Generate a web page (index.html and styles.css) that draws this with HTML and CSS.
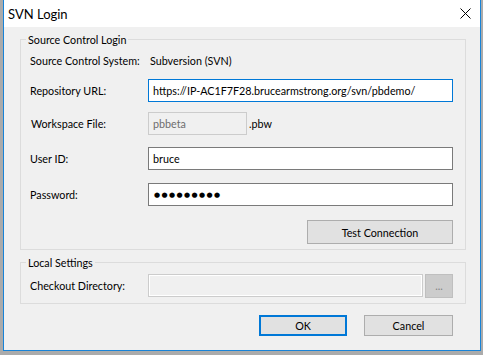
FILE: index.html
```html
<!DOCTYPE html>
<html>
<head>
<meta charset="utf-8">
<link rel="stylesheet" href="styles.css">
</head>
<body>
<div class="window">
  <div class="titlebar">
    <span class="title">SVN Login</span>
    <svg class="close" width="11" height="11" viewBox="0 0 11 11"><path d="M0.5 0.5 L10.5 10.5 M10.5 0.5 L0.5 10.5" stroke="#000" stroke-width="1" fill="none"/></svg>
  </div>
  <div class="client">
    <div class="group group-login">
      <span class="legend">Source Control Login</span>
      <div class="row row-system"><span class="label">Source Control System:</span><span class="value">Subversion (SVN)</span></div>
      <div class="row row-url"><span class="label">Repository URL:</span><div class="input focused">https://IP-AC1F7F28.brucearmstrong.org/svn/pbdemo/</div></div>
      <div class="row row-ws"><span class="label label-ws">Workspace File:</span><div class="input disabled short">pbbeta</div><span class="ext">.pbw</span></div>
      <div class="row row-user"><span class="label">User ID:</span><div class="input">bruce</div></div>
      <div class="row row-pass"><span class="label">Password:</span><div class="input password">●●●●●●●●●</div></div>
      <div class="row row-test"><button class="btn btn-test">Test Connection</button></div>
    </div>
    <div class="group group-local">
      <span class="legend">Local Settings</span>
      <div class="row row-dir"><span class="label">Checkout Directory:</span><div class="input disabled dir"></div><button class="btn btn-browse">...</button></div>
    </div>
    <div class="actions">
      <button class="btn btn-ok">OK</button>
      <button class="btn btn-cancel">Cancel</button>
    </div>
  </div>
</div>
</body>
</html>
```
FILE: styles.css
```css
html, body {
  margin: 0;
  padding: 0;
}
body {
  background: #ababab;
  width: 483px;
  height: 355px;
  overflow: hidden;
  font-family: "Lato", "Noto Sans", sans-serif;
  font-size: 10.75px;
  color: #000;
}
.window {
  margin-left: 3px;
  width: 476px;
  height: 350px;
  border: 1px solid #1883d7;
  border-top: none;
  background: #f0f0f0;
  display: flex;
  flex-direction: column;
}
.titlebar {
  height: 27px;
  background: #fff;
  display: flex;
  align-items: center;
  justify-content: space-between;
  padding: 0 9px 0 4px;
  box-sizing: border-box;
}
.title {
  font-size: 13px;
}
.close {
  display: block;
  margin-top: -1px;
}
.client {
  flex: 1;
  display: flex;
  flex-direction: column;
}
.group {
  position: relative;
  margin-left: 16px;
  width: 435px;
  border: 1px solid #dcdcdc;
  padding-left: 9px;
  box-sizing: content-box;
}
.group-login {
  margin-top: 12px;
  padding-top: 9px;
  padding-bottom: 5px;
}
.group-local {
  margin-top: 12px;
  padding-top: 11px;
  padding-bottom: 6px;
}
.legend {
  position: absolute;
  top: -8px;
  left: 5px;
  padding: 0 2px;
  background: #f0f0f0;
  line-height: 15px;
  white-space: nowrap;
}
.row {
  display: flex;
  align-items: center;
  height: 23px;
  white-space: nowrap;
}
.row-url { margin-top: 7px; }
.row-ws { margin-top: 10px; }
.row-user { margin-top: 12px; }
.row-pass { margin-top: 13px; }
.row-test { margin-top: 14px; height: 24px; justify-content: flex-end; padding-right: 12px; }
.label {
  width: 118px;
  flex: none;
}
.label-ws { padding-left: 1px; width: 117px; }
.value { padding-left: 2px; }
.input {
  box-sizing: border-box;
  width: 305px;
  flex: none;
  height: 23px;
  border: 1px solid #7a7a7a;
  background: #fff;
  padding: 0 4px;
  display: flex;
  align-items: center;
  white-space: nowrap;
  overflow: hidden;
}
.input.focused { border-color: #0078d7; }
.input.disabled {
  background: #f0f0f0;
  border-color: #cccccc;
  color: #6d6d6d;
}
.input.short { width: 99px; }
.input.dir {
  width: 275px;
  box-shadow: inset 0 0 0 1px #fff;
}
.password {
  font-family: "DejaVu Sans", sans-serif;
  font-size: 7px;
  letter-spacing: 1.4px;
  padding-left: 5px;
}
.ext { padding-left: 2px; }
.btn {
  font-family: inherit;
  font-size: 10.75px;
  color: #000;
  background: #e1e1e1;
  border: 1px solid #adadad;
  box-sizing: border-box;
  padding: 0;
  margin: 0;
}
.btn-test {
  width: 146px;
  height: 24px;
}
.btn-browse {
  width: 28px;
  height: 24px;
  margin-left: 2px;
  background: #cccccc;
  border-color: #bfbfbf;
  color: #838383;
}
.actions {
  margin-top: 11px;
  display: flex;
  justify-content: flex-end;
  padding-right: 27px;
  gap: 17px;
}
.btn-ok {
  width: 88px;
  height: 21px;
  border: 2px solid #0078d7;
}
.btn-cancel {
  width: 89px;
  height: 21px;
}
```
